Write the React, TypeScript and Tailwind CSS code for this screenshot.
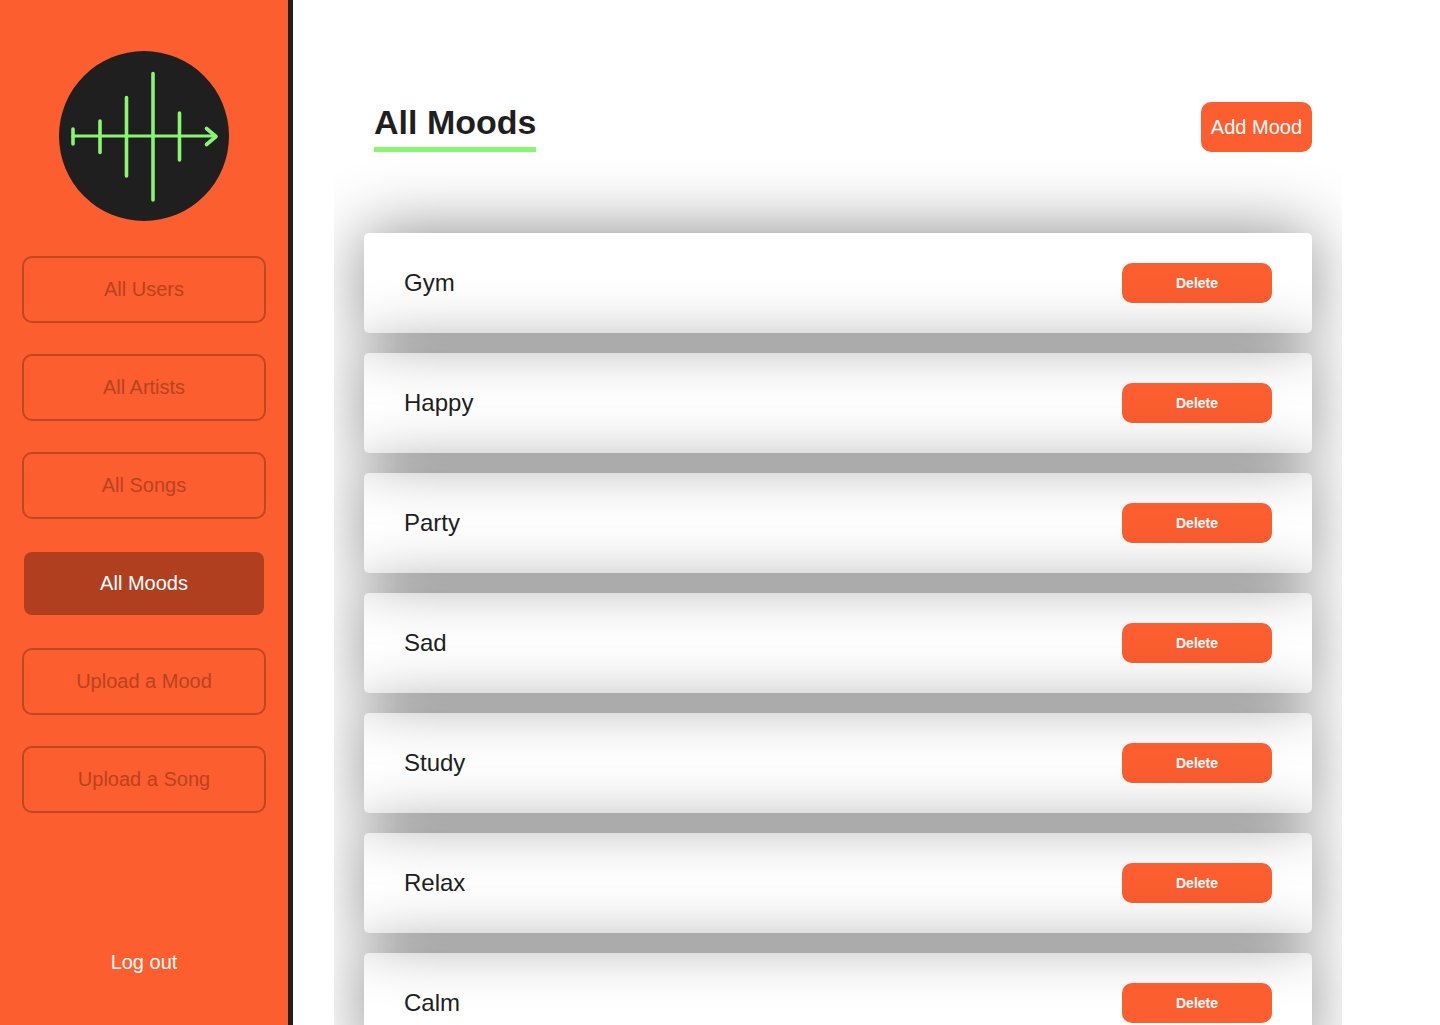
const navItems = [
  "All Users",
  "All Artists",
  "All Songs",
  "All Moods",
  "Upload a Mood",
  "Upload a Song",
];

const moods = ["Gym", "Happy", "Party", "Sad", "Study", "Relax", "Calm"];

function Logo() {
  return (
    <svg viewBox="0 0 170 170" className="size-[170px] shrink-0" role="img" aria-label="Logo">
      <circle cx="85" cy="85" r="85" fill="#1f1f1f" />
      <g fill="none" stroke="#8af570" strokeWidth="3.6" strokeLinecap="round" strokeLinejoin="round">
        <path strokeWidth="3.2" d="M14 85H156" />
        <path d="M14 78V93M41 70V101.500M67.500 46.500V125M94 22.500V149M120.500 62V109" />
        <path d="M147.500 77.500L157 85.500L147.500 93.500" />
      </g>
    </svg>
  );
}

function NavButton({ label, active }: { label: string; active: boolean }) {
  return (
    <button
      type="button"
      aria-current={active ? "page" : undefined}
      className={
        active
          ? "h-[67px] w-full cursor-pointer rounded-[10px] border-2 border-transparent bg-[#b03f1f] bg-clip-padding pb-px text-xl text-white"
          : "h-[67px] w-full cursor-pointer rounded-[10px] border-2 border-[#bf4724] pb-px text-xl text-[#b8431f]"
      }
    >
      {label}
    </button>
  );
}

function MoodRow({ name }: { name: string }) {
  return (
    <li className="flex h-[100px] items-center justify-between rounded-[5px] px-10 shadow-[0_0_68px_rgba(0,0,0,0.47)]">
      <span className="text-2xl text-[#1f1f1f]">{name}</span>
      <button
        type="button"
        aria-label={`Delete ${name}`}
        className="h-10 w-[150px] cursor-pointer rounded-[10px] bg-[#fc5e30] text-sm font-bold text-white"
      >
        Delete
      </button>
    </li>
  );
}

export default function App() {
  return (
    <div className="flex h-screen overflow-hidden bg-white font-['Liberation_Sans',Arial,sans-serif]">
      <aside className="flex w-[293px] shrink-0 flex-col items-center border-r-5 border-[#1f1f1f] bg-[#fc5e30] px-[22px] pt-[51px] pb-[49px]">
        <Logo />
        <nav className="mt-[35px] flex w-full flex-col gap-[31px]">
          {navItems.map((label) => (
            <NavButton key={label} label={label} active={label === "All Moods"} />
          ))}
        </nav>
        <button type="button" className="mt-auto cursor-pointer text-xl text-white">
          Log out
        </button>
      </aside>
      <main className="mr-[98px] ml-[41px] min-w-0 flex-1 overflow-y-auto px-[30px] pt-[102px] pb-10 [scrollbar-width:none]">
        <header className="flex items-start justify-between pl-[10px]">
          <h1 className="border-b-5 border-[#8af570] pt-0.5 pb-1.5 text-[34px] leading-[37px] font-bold text-[#1f1f1f]">
            All Moods
          </h1>
          <button
            type="button"
            className="h-[50px] cursor-pointer rounded-[10px] bg-[#fc5e30] px-[10px] text-xl text-white"
          >
            Add Mood
          </button>
        </header>
        <ul className="mt-[81px] flex flex-col gap-5">
          {moods.map((name) => (
            <MoodRow key={name} name={name} />
          ))}
        </ul>
      </main>
    </div>
  );
}
